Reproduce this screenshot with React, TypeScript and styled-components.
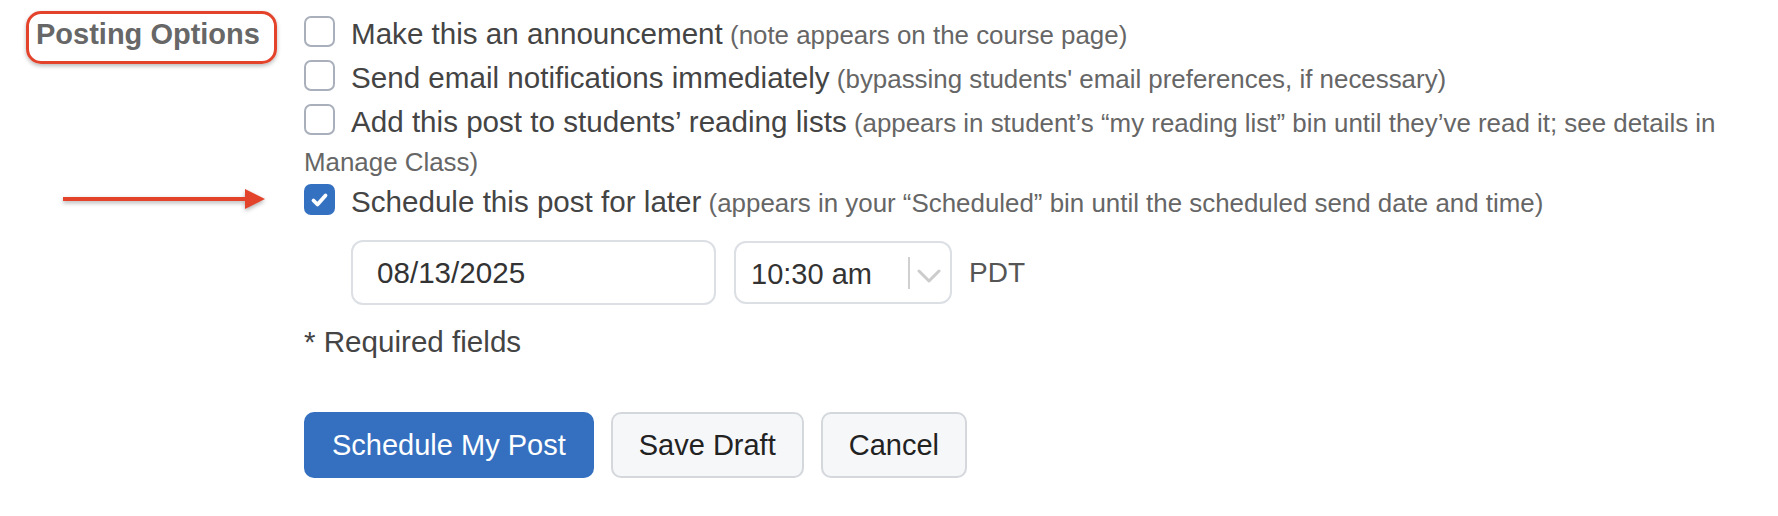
import React from "react";
import styled, { createGlobalStyle } from "styled-components";

const GlobalStyle = createGlobalStyle`
  html, body {
    margin: 0;
    padding: 0;
    background: #ffffff;
  }
  body {
    font-family: "Liberation Sans", Arial, Helvetica, sans-serif;
    -webkit-font-smoothing: antialiased;
  }
`;

const Page = styled.div`
  display: grid;
  grid-template-columns: 304px 1fr;
  padding: 12px 18px 20px 0;
  align-items: start;
`;

const LabelCell = styled.div`
  grid-column: 1;
  grid-row: 1 / span 2;
  padding-left: 26px;
  margin-top: -1px;
`;

const SectionLabel = styled.div`
  display: inline-block;
  font-weight: 700;
  font-size: 29px;
  line-height: 35px;
  color: #676767;
  border: 3px solid #e4432b;
  border-radius: 15px;
  padding: 3px 14px 9px 7px;
  box-shadow: 0 2px 4px rgba(0, 0, 0, 0.28);
`;

const ArrowCell = styled.div<{ $row: number }>`
  grid-column: 1;
  grid-row: ${(p) => p.$row};
  align-self: center;
  padding-left: 63px;
  display: flex;
`;

const Option = styled.div<{ $row: number }>`
  grid-column: 2;
  grid-row: ${(p) => p.$row};
  font-size: 25.9px;
  line-height: 36px;
  color: #666666;
`;

const MainText = styled.span`
  font-size: 29.6px;
  line-height: 44px;
  color: #444444;
`;

const Box = styled.span<{ $checked?: boolean }>`
  display: inline-block;
  box-sizing: border-box;
  width: 31px;
  height: 31px;
  border: 2px solid ${(p) => (p.$checked ? "#3571c1" : "#a9b0bb")};
  background: ${(p) => (p.$checked ? "#3571c1" : "#ffffff")};
  border-radius: 7px;
  vertical-align: -3px;
  margin-right: 16px;

  svg {
    display: block;
  }
`;

const ScheduleRow = styled.div<{ $row: number }>`
  grid-column: 2;
  grid-row: ${(p) => p.$row};
  display: flex;
  align-items: center;
  padding-left: 47px;
  margin-top: 16px;
`;

const DateField = styled.div`
  box-sizing: border-box;
  width: 365px;
  height: 65px;
  border: 2px solid #dcdfe4;
  border-radius: 12px;
  display: flex;
  align-items: center;
  padding-left: 24px;
  font-size: 29.6px;
  color: #333333;
`;

const TimeSelect = styled.div`
  box-sizing: border-box;
  width: 218px;
  height: 63px;
  margin-left: 18px;
  border: 2px solid #dcdfe4;
  border-radius: 12px;
  display: flex;
  align-items: center;
  font-size: 29px;
  color: #333333;
`;

const TimeValue = styled.div`
  flex: 1;
  padding-left: 15px;
  padding-top: 3px;
`;

const Separator = styled.div`
  width: 2px;
  height: 32px;
  background: #d0d0d0;
`;

const Indicator = styled.div`
  width: 40px;
  display: flex;
  justify-content: flex-start;
  padding-left: 7px;
  box-sizing: border-box;
  margin-top: 6px;
`;

const TimeZone = styled.span`
  margin-left: 17px;
  font-size: 28px;
  color: #555555;
`;

const Required = styled.div<{ $row: number }>`
  grid-column: 2;
  grid-row: ${(p) => p.$row};
  margin-top: 15px;
  font-size: 29.6px;
  line-height: 44px;
  color: #444444;
`;

const Actions = styled.div<{ $row: number }>`
  grid-column: 2;
  grid-row: ${(p) => p.$row};
  display: flex;
  gap: 17px;
  margin-top: 48px;
`;

const Button = styled.button<{ $primary?: boolean }>`
  box-sizing: border-box;
  height: 66px;
  padding: 0 26px;
  border: 2px solid ${(p) => (p.$primary ? "#3570c0" : "#d4d7dc")};
  background: ${(p) => (p.$primary ? "#3570c0" : "#f6f7f9")};
  color: ${(p) => (p.$primary ? "#ffffff" : "#222222")};
  border-radius: 10px;
  font-family: "Liberation Sans", Arial, Helvetica, sans-serif;
  font-size: 29px;
  cursor: pointer;
`;

const Check = () => (
  <svg width="27" height="27" viewBox="0 0 27 27">
    <path
      d="M7.5 14.5 L11.5 18.5 L19.5 9.5"
      fill="none"
      stroke="#ffffff"
      strokeWidth="3.8"
      strokeLinecap="round"
      strokeLinejoin="round"
    />
  </svg>
);

const Checkbox = ({ checked }: { checked?: boolean }) => (
  <Box $checked={checked}>{checked ? <Check /> : null}</Box>
);

const Arrow = () => (
  <svg
    width="204"
    height="26"
    viewBox="0 0 204 26"
    style={{ filter: "drop-shadow(0 2px 2px rgba(0,0,0,0.3))" }}
  >
    <rect x="0" y="8" width="186" height="4" fill="#e4432b" />
    <polygon points="182,0 202,10 182,20" fill="#e4432b" />
  </svg>
);

const Chevron = () => (
  <svg width="24" height="14" viewBox="0 0 24 14">
    <path
      d="M2 2 L12 12 L22 2"
      fill="none"
      stroke="#cccccc"
      strokeWidth="3"
      strokeLinecap="round"
      strokeLinejoin="round"
    />
  </svg>
);

export default function App() {
  return (
    <>
      <GlobalStyle />
      <Page>
        <LabelCell>
          <SectionLabel>Posting Options</SectionLabel>
        </LabelCell>

        <Option $row={1}>
          <Checkbox />
          <MainText>Make this an announcement</MainText> (note appears on the
          course page)
        </Option>
        <Option $row={2}>
          <Checkbox />
          <MainText>Send email notifications immediately</MainText> (bypassing
          students' email preferences, if necessary)
        </Option>
        <Option $row={3}>
          <Checkbox />
          <MainText>Add this post to students’ reading lists</MainText>{" "}
          (appears in student’s “my reading list” bin until they’ve read it;
          see details in Manage Class)
        </Option>

        <ArrowCell $row={4}>
          <Arrow />
        </ArrowCell>
        <Option $row={4}>
          <Checkbox checked />
          <MainText>Schedule this post for later</MainText> (appears in your
          “Scheduled” bin until the scheduled send date and time)
        </Option>

        <ScheduleRow $row={5}>
          <DateField>08/13/2025</DateField>
          <TimeSelect>
            <TimeValue>10:30 am</TimeValue>
            <Separator />
            <Indicator>
              <Chevron />
            </Indicator>
          </TimeSelect>
          <TimeZone>PDT</TimeZone>
        </ScheduleRow>

        <Required $row={6}>* Required fields</Required>

        <Actions $row={7}>
          <Button $primary>Schedule My Post</Button>
          <Button>Save Draft</Button>
          <Button>Cancel</Button>
        </Actions>
      </Page>
    </>
  );
}
